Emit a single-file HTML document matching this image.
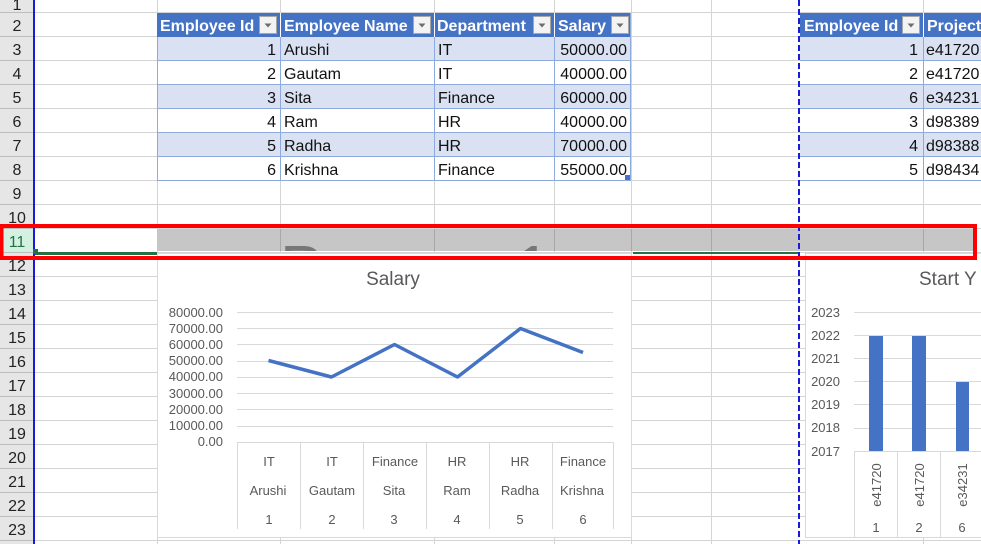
<!DOCTYPE html>
<html><head><meta charset="utf-8"><style>
html,body{margin:0;padding:0;background:#fff;overflow:hidden}
svg{display:block;font-family:"Liberation Sans",Arial,sans-serif}
</style></head><body>
<svg width="981" height="544" viewBox="0 0 981 544" xmlns="http://www.w3.org/2000/svg">
<defs>
<clipPath id="band"><rect x="157" y="229" width="818" height="22"/></clipPath>
<g id="fb"><rect width="17" height="17" fill="#f3f3f3" stroke="#a6a6a6"/><path d="M5 7h7l-3.5 4z" fill="#6d6d6d"/></g>
</defs>
<rect width="981" height="544" fill="#fff"/>
<!-- row headers -->
<rect x="0" y="0" width="33" height="544" fill="#e6e6e6"/>
<rect x="0" y="228.5" width="33" height="24" fill="#d3f0e0"/>
<g stroke="#d4d4d4" stroke-width="1">
<path d="M0 12.5H981M0 36.5H981M0 60.5H981M0 84.5H981M0 108.5H981M0 132.5H981M0 156.5H981M0 180.5H981M0 204.5H981M0 228.5H981M0 252.5H981M0 276.5H981M0 300.5H981M0 324.5H981M0 348.5H981M0 372.5H981M0 396.5H981M0 420.5H981M0 444.5H981M0 468.5H981M0 492.5H981M0 516.5H981M0 540.5H981"/>
<path d="M157.5 0V544M280.5 0V544M434.5 0V544M554.5 0V544M631.5 0V544M711.5 0V544M923.5 0V544"/>
</g>
<g stroke="#bdbdbd"><path d="M0 12.5H33M0 36.5H33M0 60.5H33M0 84.5H33M0 108.5H33M0 132.5H33M0 156.5H33M0 180.5H33M0 204.5H33M0 228.5H33M0 252.5H33M0 276.5H33M0 300.5H33M0 324.5H33M0 348.5H33M0 372.5H33M0 396.5H33M0 420.5H33M0 444.5H33M0 468.5H33M0 492.5H33M0 516.5H33M0 540.5H33"/></g>
<g font-size="16" fill="#222" text-anchor="middle">
<text x="17" y="10">1</text><text x="17" y="31">2</text><text x="17" y="55">3</text><text x="17" y="79">4</text><text x="17" y="103">5</text><text x="17" y="127">6</text><text x="17" y="151">7</text><text x="17" y="175">8</text><text x="17" y="199">9</text><text x="17" y="223">10</text><text x="17" y="247" fill="#217346">11</text><text x="17" y="271">12</text><text x="17" y="295">13</text><text x="17" y="319">14</text><text x="17" y="343">15</text><text x="17" y="367">16</text><text x="17" y="391">17</text><text x="17" y="415">18</text><text x="17" y="439">19</text><text x="17" y="463">20</text><text x="17" y="487">21</text><text x="17" y="511">22</text><text x="17" y="535">23</text>
</g>
<rect x="33" y="0" width="2" height="544" fill="#1a1adb"/>
<!-- table 1 -->
<rect x="157" y="13" width="473" height="24" fill="#4472c4"/>
<g fill="#d9e1f2"><rect x="157" y="37" width="473" height="24"/><rect x="157" y="85" width="473" height="24"/><rect x="157" y="133" width="473" height="24"/></g>
<g stroke="#8ea9db"><path d="M157 60.5H630M157 84.5H630M157 108.5H630M157 132.5H630M157 156.5H630M157 180.5H630"/><path d="M157.5 37V181M280.5 37V181M434.5 37V181M554.5 37V181M630.5 13V181"/></g>
<g stroke="#fff"><path d="M280.5 13V37M434.5 13V37M554.5 13V37"/></g>
<g font-size="16" font-weight="bold" fill="#fff">
<text x="160" y="31">Employee Id</text><text x="284" y="31">Employee Name</text><text x="437" y="31">Department</text><text x="558" y="31">Salary</text></g>
<use href="#fb" x="259.5" y="16.5"/><use href="#fb" x="413.5" y="16.5"/><use href="#fb" x="533.5" y="16.5"/><use href="#fb" x="611.5" y="16.5"/>
<g font-size="16" fill="#111">
<g text-anchor="end"><text x="276" y="55">1</text><text x="276" y="79">2</text><text x="276" y="103">3</text><text x="276" y="127">4</text><text x="276" y="151">5</text><text x="276" y="175">6</text>
<text x="627" y="55">50000.00</text><text x="627" y="79">40000.00</text><text x="627" y="103">60000.00</text><text x="627" y="127">40000.00</text><text x="627" y="151">70000.00</text><text x="627" y="175">55000.00</text></g>
<text x="284" y="55">Arushi</text><text x="284" y="79">Gautam</text><text x="284" y="103">Sita</text><text x="284" y="127">Ram</text><text x="284" y="151">Radha</text><text x="284" y="175">Krishna</text>
<text x="438" y="55">IT</text><text x="438" y="79">IT</text><text x="438" y="103">Finance</text><text x="438" y="127">HR</text><text x="438" y="151">HR</text><text x="438" y="175">Finance</text>
</g>
<rect x="625" y="175" width="5" height="5" fill="#4472c4"/>
<!-- table 2 -->
<rect x="800" y="13" width="181" height="24" fill="#4472c4"/>
<g fill="#d9e1f2"><rect x="800" y="37" width="181" height="24"/><rect x="800" y="85" width="181" height="24"/><rect x="800" y="133" width="181" height="24"/></g>
<g stroke="#8ea9db"><path d="M800 60.5H981M800 84.5H981M800 108.5H981M800 132.5H981M800 156.5H981M800 180.5H981"/><path d="M923.5 37V181"/></g>
<path d="M923.5 13V37" stroke="#fff"/>
<g font-size="16" font-weight="bold" fill="#fff"><text x="804" y="31">Employee Id</text><text x="927" y="31">Project</text></g>
<use href="#fb" x="902.5" y="16.5"/>
<g font-size="16" fill="#111">
<g text-anchor="end"><text x="918" y="55">1</text><text x="918" y="79">2</text><text x="918" y="103">6</text><text x="918" y="127">3</text><text x="918" y="151">4</text><text x="918" y="175">5</text></g>
<text x="926" y="55">e41720</text><text x="926" y="79">e41720</text><text x="926" y="103">e34231</text><text x="926" y="127">d98389</text><text x="926" y="151">d98388</text><text x="926" y="175">d98434</text></g>
<!-- row 11 band -->
<rect x="157" y="229" width="818" height="22" fill="#c6c6c6"/>
<g stroke="#a8a8a8"><path d="M280.5 229V251M434.5 229V251M554.5 229V251M631.5 229V251M711.5 229V251M923.5 229V251"/></g>
<g clip-path="url(#band)" fill="#777" font-size="64"><text x="280" y="290">P</text><text x="515" y="290">1</text></g>
<rect x="35" y="229" width="122" height="23" fill="#fff"/>
<rect x="35" y="252" width="122" height="3" fill="#217346"/>
<rect x="33" y="249" width="5" height="5" fill="#217346"/>
<rect x="633" y="252" width="166" height="2" fill="#217346"/>
<!-- chart 1 -->
<rect x="157.5" y="253.5" width="474" height="284" fill="#fff" stroke="#d9d9d9"/>
<text x="393" y="285" font-size="19" fill="#595959" text-anchor="middle">Salary</text>
<g stroke="#d9d9d9"><path d="M237 312.5H613M237 328.5H613M237 344.5H613M237 361.5H613M237 377.5H613M237 393.5H613M237 409.5H613M237 426.5H613M237 442.5H613"/>
<path d="M237.5 442V529M300.5 442V529M363.5 442V529M426.5 442V529M489.5 442V529M552.5 442V529M613.5 442V529"/></g>
<g font-size="13" fill="#595959" text-anchor="end">
<text x="223" y="317">80000.00</text><text x="223" y="333">70000.00</text><text x="223" y="349">60000.00</text><text x="223" y="365">50000.00</text><text x="223" y="381">40000.00</text><text x="223" y="398">30000.00</text><text x="223" y="414">20000.00</text><text x="223" y="430">10000.00</text><text x="223" y="446">0.00</text></g>
<g font-size="13" fill="#595959" text-anchor="middle">
<text x="269" y="466">IT</text><text x="332" y="466">IT</text><text x="395" y="466">Finance</text><text x="457" y="466">HR</text><text x="520" y="466">HR</text><text x="583" y="466">Finance</text>
<text x="268" y="495">Arushi</text><text x="332" y="495">Gautam</text><text x="394" y="495">Sita</text><text x="457" y="495">Ram</text><text x="520" y="495">Radha</text><text x="582" y="495">Krishna</text>
<text x="269" y="524">1</text><text x="332" y="524">2</text><text x="394" y="524">3</text><text x="457" y="524">4</text><text x="520" y="524">5</text><text x="583" y="524">6</text></g>
<polyline points="268.5,360.5 331.5,377 394.5,344.5 457.5,377 520.5,328.5 583,352.5" fill="none" stroke="#4472c4" stroke-width="3.5" stroke-linejoin="round"/>
<!-- chart 2 -->
<rect x="805.5" y="253.5" width="180" height="284" fill="#fff" stroke="#d9d9d9"/>
<text x="919" y="285" font-size="19" fill="#595959">Start Y</text>
<g stroke="#d9d9d9"><path d="M854 312.5H981M854 335.5H981M854 358.5H981M854 381.5H981M854 404.5H981M854 428.5H981M854 451.5H981"/>
<path d="M854.5 451V537M897.5 451V537M940.5 451V537"/></g>
<g font-size="13" fill="#595959" text-anchor="end">
<text x="840" y="317">2023</text><text x="840" y="340">2022</text><text x="840" y="363">2021</text><text x="840" y="386">2020</text><text x="840" y="409">2019</text><text x="840" y="432">2018</text><text x="840" y="456">2017</text></g>
<g fill="#4472c4"><rect x="869" y="336" width="14" height="115"/><rect x="912" y="336" width="14" height="115"/><rect x="956" y="382" width="13" height="69"/></g>
<g font-size="13" fill="#595959" text-anchor="middle">
<text transform="translate(881,485) rotate(-90)">e41720</text><text transform="translate(924,485) rotate(-90)">e41720</text><text transform="translate(967,485) rotate(-90)">e34231</text>
<text x="876" y="532">1</text><text x="919" y="532">2</text><text x="962" y="532">6</text></g>
<!-- page break dashed -->
<path d="M799 0V544" stroke="#1a1adb" stroke-width="2" stroke-dasharray="6 3"/>
<!-- red box -->
<rect x="1.5" y="226" width="973.5" height="32" fill="none" stroke="#ff0000" stroke-width="4"/>
</svg>
</body></html>
